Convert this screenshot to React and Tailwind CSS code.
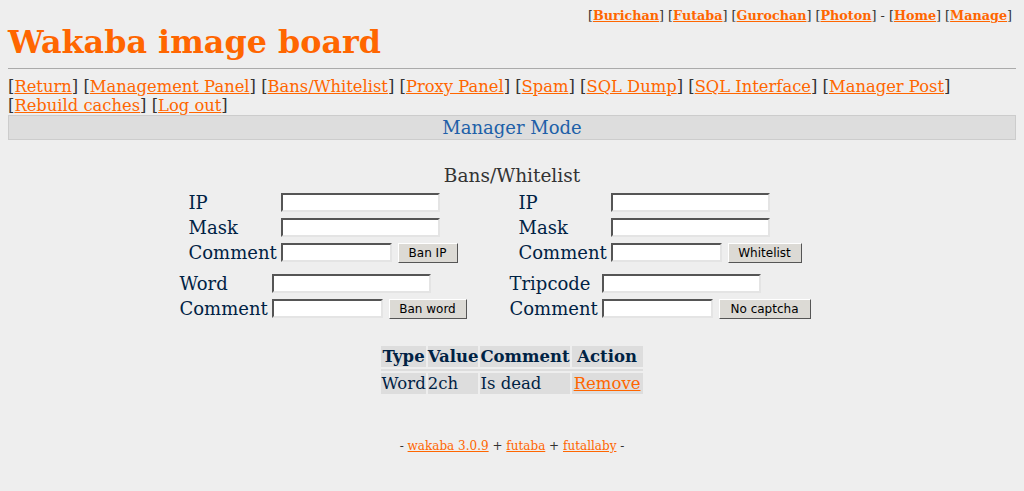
import React from 'react';

const serif = "font-['DejaVu_Serif',serif]";

const Lnk = ({ children }) => (
    <a href="#" className="text-[#ff6600] underline">{children}</a>
);

const Input = ({ w }) => (
    <input
        type="text"
        className={`${w} h-[19px] bg-white border-2 border-t-[#555] border-l-[#555] border-b-[#e4e4e4] border-r-[#e4e4e4] outline-none`}
    />
);

const Btn = ({ children, w }) => (
    <button
        className={`${w} h-[20px] ml-[6px] bg-[#dcdad5] border border-t-white border-l-white border-b-[#555] border-r-[#555] font-['DejaVu_Sans',sans-serif] text-[12px] text-black leading-none`}
    >
        {children}
    </button>
);

const Row = ({ label, children }) => (
    <div className="flex items-center h-[25px]">
        <span className="w-[92px] text-[#002244] text-[18px]">{label}</span>
        {children}
    </div>
);

const App = () => {
    const topLinks = ['Burichan', 'Futaba', 'Gurochan', 'Photon'];
    const navLinks = ['Return', 'Management Panel', 'Bans/Whitelist', 'Proxy Panel', 'Spam', 'SQL Dump', 'SQL Interface', 'Manager Post'];

    return (
        <div className={`${serif} min-h-screen bg-[#eeeeee] text-[#333] px-2 pt-2 pb-2`}>
            {/* style switcher */}
            <div className="text-right text-[12.75px] leading-[15px] pr-1">
                {topLinks.map((l) => (
                    <span key={l}>[<b><Lnk>{l}</Lnk></b>] </span>
                ))}
                - [<b><Lnk>Home</Lnk></b>] [<b><Lnk>Manage</Lnk></b>]
            </div>

            <h1 className="text-[#ff6600] font-bold text-[31.8px] leading-[37px] mt-0">Wakaba image board</h1>

            <hr className="mt-[8px] border-0 border-t border-[#aaa]" />

            <div className="mt-[8px] text-[16.35px] leading-[19px]">
                {navLinks.map((l) => (
                    <span key={l}>[<Lnk>{l}</Lnk>] </span>
                ))}
                <br />
                [<Lnk>Rebuild caches</Lnk>] [<Lnk>Log out</Lnk>]
            </div>

            <div className="h-[25px] bg-[#dddddd] border border-[#cccccc] flex items-center justify-center text-[#2060a8] text-[18px]">
                Manager Mode
            </div>

            <div className="mt-[26px] text-center text-[18.5px] leading-[20px]">Bans/Whitelist</div>

            <div className="flex ml-[170px] mt-[4px]">
                <div className="w-[290px] flex flex-col items-center">
                    <div>
                        <Row label="IP"><Input w="w-[159px]" /></Row>
                        <Row label="Mask"><Input w="w-[159px]" /></Row>
                        <Row label="Comment"><Input w="w-[111px]" /><Btn w="w-[60px]">Ban IP</Btn></Row>
                    </div>
                    <div className="mt-[6px]">
                        <Row label="Word"><Input w="w-[159px]" /></Row>
                        <Row label="Comment"><Input w="w-[111px]" /><Btn w="w-[78px]">Ban word</Btn></Row>
                    </div>
                </div>
                <div className="w-[38px]" />
                <div className="w-[308px] flex flex-col items-center">
                    <div>
                        <Row label="IP"><Input w="w-[159px]" /></Row>
                        <Row label="Mask"><Input w="w-[159px]" /></Row>
                        <Row label="Comment"><Input w="w-[111px]" /><Btn w="w-[74px]">Whitelist</Btn></Row>
                    </div>
                    <div className="mt-[6px]">
                        <Row label="Tripcode"><Input w="w-[159px]" /></Row>
                        <Row label="Comment"><Input w="w-[111px]" /><Btn w="w-[92px]">No captcha</Btn></Row>
                    </div>
                </div>
            </div>

            <div className="flex justify-center mt-[23px]">
                <table className="border-separate border-spacing-[2px] text-[16.5px] text-[#002244]">
                    <thead>
                        <tr className="h-[21px]">
                            {['Type', 'Value', 'Comment', 'Action'].map((h) => (
                                <th key={h} className="bg-[#dddddd] font-bold px-0 leading-[20px]">{h}</th>
                            ))}
                        </tr>
                    </thead>
                    <tbody>
                        <tr>
                            <td colSpan={4} className="h-[2px] p-0 bg-[#dddddd]"></td>
                        </tr>
                        <tr className="h-[21px]">
                            <td className="bg-[#dddddd] px-0 leading-[20px]">Word</td>
                            <td className="bg-[#dddddd] px-0 leading-[20px]">2ch</td>
                            <td className="bg-[#dddddd] px-0 leading-[20px]">Is dead</td>
                            <td className="bg-[#dddddd] px-[2px] leading-[20px]"><Lnk>Remove</Lnk></td>
                        </tr>
                    </tbody>
                </table>
            </div>

            <div className="mt-[43px] text-center text-[12px] leading-[14px]">
                - <Lnk>wakaba 3.0.9</Lnk> + <Lnk>futaba</Lnk> + <Lnk>futallaby</Lnk> -
            </div>
        </div>
    );
};

export default App;
